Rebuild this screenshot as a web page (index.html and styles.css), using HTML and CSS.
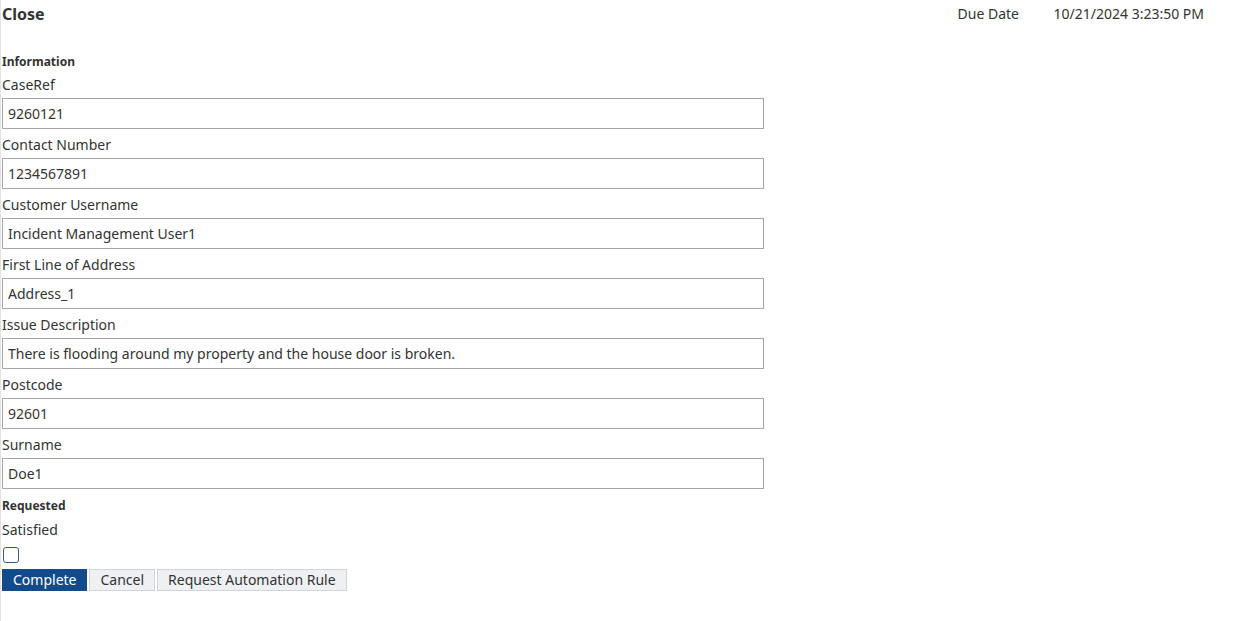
FILE: index.html
```html
<!DOCTYPE html>
<html>
<head>
<meta charset="utf-8">
<link rel="stylesheet" href="styles.css">
</head>
<body>
<div class="page">
  <div class="header">
    <h1 class="title">Close</h1>
    <div class="due">
      <span class="due-label">Due Date</span>
      <span class="due-value">10/21/2024 3:23:50 PM</span>
    </div>
  </div>
  <div class="section-title info">Information</div>
  <div class="field">
    <label class="label">CaseRef</label>
    <div class="input">9260121</div>
  </div>
  <div class="field">
    <label class="label">Contact Number</label>
    <div class="input">1234567891</div>
  </div>
  <div class="field">
    <label class="label">Customer Username</label>
    <div class="input">Incident Management User1</div>
  </div>
  <div class="field">
    <label class="label">First Line of Address</label>
    <div class="input">Address_1</div>
  </div>
  <div class="field">
    <label class="label">Issue Description</label>
    <div class="input">There is flooding around my property and the house door is broken.</div>
  </div>
  <div class="field">
    <label class="label">Postcode</label>
    <div class="input">92601</div>
  </div>
  <div class="field">
    <label class="label">Surname</label>
    <div class="input">Doe1</div>
  </div>
  <div class="section-title req">Requested</div>
  <div class="label sat">Satisfied</div>
  <div class="checkbox"></div>
  <div class="buttons">
    <button class="btn primary">Complete</button>
    <button class="btn">Cancel</button>
    <button class="btn">Request Automation Rule</button>
  </div>
</div>
</body>
</html>
```
FILE: styles.css
```css
html, body {
  margin: 0;
  padding: 0;
  background: #fff;
}
body {
  font-family: "Noto Sans", "Open Sans", sans-serif;
  color: #333;
}
.page {
  border-left: 1px solid #e2e2e2;
  min-height: 621px;
  box-sizing: border-box;
  padding-left: 1px;
}
.header {
  display: flex;
  align-items: flex-start;
  height: 50px;
}
.title {
  margin: 0;
  font-size: 16px;
  font-weight: 700;
  line-height: 20px;
  padding-top: 4px;
  flex: 1;
  color: #333;
}
.due {
  display: flex;
  font-size: 14px;
  line-height: 20px;
  padding-top: 4px;
  margin-right: 33px;
}
.due-label {
  width: 96px;
}
.section-title {
  font-size: 12px;
  font-weight: 700;
  line-height: 18px;
}
.info {
  margin-top: 3px;
}
.label {
  display: block;
  font-size: 14px;
  line-height: 20px;
  margin-top: 4px;
}
.field {
  display: flex;
  flex-direction: column;
  margin-bottom: 2px;
}
.field .label {
  margin-bottom: 3px;
}
.input {
  width: 762px;
  height: 31px;
  box-sizing: border-box;
  border: 1px solid #a6a6a6;
  padding: 0 5px;
  font-size: 14px;
  line-height: 29px;
  white-space: nowrap;
}
.req {
  margin-top: 8px;
}
.sat {
  margin-top: 5px;
}
.checkbox {
  width: 14px;
  height: 14px;
  border: 1px solid #3b5a8c;
  border-radius: 3px;
  margin: 7px 0 0 1px;
}
.buttons {
  display: flex;
  gap: 2px;
  margin-top: 6px;
}
.btn {
  font-family: "Noto Sans", "Open Sans", sans-serif;
  font-size: 14px;
  line-height: 18px;
  height: 22px;
  padding: 0 10px;
  border: 1px solid #d2d4da;
  background: #eef0f4;
  color: #333;
  margin: 0;
  border-radius: 0;
}
.btn.primary {
  background: #124b8c;
  border-color: #124b8c;
  color: #fff;
}
```
